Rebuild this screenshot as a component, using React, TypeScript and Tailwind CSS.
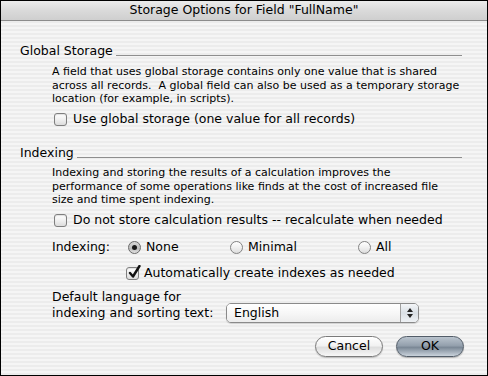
import React from "react";

const font = { fontFamily: '"DejaVu Sans", "Lucida Grande", sans-serif' };

// Aqua style checkbox
const CheckBox = ({ checked = false }: { checked?: boolean }) => (
  <div className="relative w-[13px] h-[13px] shrink-0 rounded-[3px] border border-[#7f7f7f] bg-[linear-gradient(180deg,#ffffff_0%,#f0f0f0_50%,#dcdcdc_100%)] shadow-[inset_0_1px_1px_rgba(0,0,0,0.12)]">
    {checked && (
      <svg
        className="absolute left-[1px] top-[-3px]"
        width="13"
        height="14"
        viewBox="0 0 13 14"
      >
        <path
          d="M2 8 L5 11.5 L11.5 1"
          fill="none"
          stroke="#111"
          strokeWidth="2.4"
          strokeLinecap="round"
          strokeLinejoin="round"
        />
      </svg>
    )}
  </div>
);

const Radio = ({ selected = false }: { selected?: boolean }) => (
  <div
    className={`flex items-center justify-center w-[13px] h-[13px] shrink-0 rounded-full border ${
      selected
        ? "border-[#6a6a6a] bg-[linear-gradient(180deg,#d8d8d8_0%,#bdbdbd_60%,#e2e2e2_100%)]"
        : "border-[#838383] bg-[linear-gradient(180deg,#ffffff_0%,#f0f0f0_50%,#dddddd_100%)]"
    }`}
  >
    {selected && <div className="w-[5px] h-[5px] rounded-full bg-[#1a1a1a]" />}
  </div>
);

const SectionHeading = ({ label }: { label: string }) => (
  <div className="flex items-baseline h-[16px] pr-[25px]">
    <span className="text-[12.5px] leading-[16px] text-black">{label}</span>
    <div className="flex-1 h-px bg-[#8e8e8e] ml-[3px] translate-y-[1px]" />
  </div>
);

export default function App() {
  return (
    <div
      className="w-[488px] h-[376px] border border-black flex flex-col text-black overflow-hidden"
      style={font}
    >
      {/* title bar */}
      <div className="h-[20px] shrink-0 flex items-center justify-center border-b border-[#8c8c8c] bg-[linear-gradient(180deg,#ececec_0%,#dadada_50%,#cfcfcf_100%)]">
        <span className="text-[12.5px] leading-none">
          Storage Options for Field "FullName"
        </span>
      </div>

      {/* body */}
      <div className="flex-1 pl-[19px] pt-[22px] bg-[repeating-linear-gradient(180deg,#ececec_0px,#ececec_2px,#f5f5f5_2px,#f5f5f5_4px)]">
        <SectionHeading label="Global Storage" />
        <p className="ml-[32px] mt-[6px] text-[11px] leading-[13.5px]">
          A field that uses global storage contains only one value that is shared
          <br />
          across all records.&nbsp; A global field can also be used as a temporary storage
          <br />
          location (for example, in scripts).
        </p>
        <div className="ml-[34px] mt-[5.5px] h-[16px] flex items-center gap-[6px]">
          <CheckBox />
          <span className="text-[12.5px]">Use global storage (one value for all records)</span>
        </div>

        <div className="mt-[18px]">
          <SectionHeading label="Indexing" />
        </div>
        <p className="ml-[32px] mt-[5px] text-[11px] leading-[13.5px]">
          Indexing and storing the results of a calculation improves the
          <br />
          performance of some operations like finds at the cost of increased file
          <br />
          size and time spent indexing.
        </p>
        <div className="ml-[34px] mt-[6px] h-[16px] flex items-center gap-[6px]">
          <CheckBox />
          <span className="text-[12.5px]">
            Do not store calculation results -- recalculate when needed
          </span>
        </div>

        <div className="ml-[32px] mt-[10.5px] h-[16px] flex items-center text-[12.5px]">
          <span className="w-[76px] shrink-0">Indexing:</span>
          <div className="w-[102px] flex items-center gap-[5px]">
            <Radio selected />
            <span>None</span>
          </div>
          <div className="w-[128px] flex items-center gap-[5px]">
            <Radio />
            <span>Minimal</span>
          </div>
          <div className="flex items-center gap-[5px]">
            <Radio />
            <span>All</span>
          </div>
        </div>

        <div className="ml-[106px] mt-[10px] h-[16px] flex items-center gap-[5px]">
          <CheckBox checked />
          <span className="text-[12.5px]">Automatically create indexes as needed</span>
        </div>

        <div className="ml-[32px] mt-[8px] flex items-start text-[12.5px]">
          <div className="w-[174px] shrink-0 leading-[16px]">
            Default language for
            <br />
            indexing and sorting text:
          </div>
          <div className="mt-[14px] w-[193px] h-[20px] flex rounded-[5px] border border-[#8a8a8a] overflow-hidden shadow-[0_1px_1px_rgba(0,0,0,0.15)]">
            <div className="flex-1 flex items-center pl-[7px] bg-[linear-gradient(180deg,#ffffff_0%,#f7f7f7_50%,#ececec_100%)]">
              English
            </div>
            <div className="w-[18px] flex flex-col items-center justify-center gap-[2px] border-l border-[#a0a0a0] bg-[linear-gradient(180deg,#f4f6f8_0%,#d9dfe5_50%,#eef1f4_100%)]">
              <svg width="6" height="4" viewBox="0 0 6 4">
                <path d="M0 4 L3 0 L6 4 Z" fill="#222" />
              </svg>
              <svg width="6" height="4" viewBox="0 0 6 4">
                <path d="M0 0 L3 4 L6 0 Z" fill="#222" />
              </svg>
            </div>
          </div>
        </div>

        <div className="mt-[13px] pr-[23px] flex justify-end gap-[13px] text-[12.5px]">
          <button className="w-[68px] h-[21px] rounded-full border border-[#7a7a7a] bg-[linear-gradient(180deg,#ffffff_0%,#f2f2f2_45%,#dedede_55%,#f7f7f7_100%)] shadow-[0_1px_1px_rgba(0,0,0,0.2)] leading-none">
            Cancel
          </button>
          <button className="w-[68px] h-[21px] rounded-full border border-[#525c68] bg-[linear-gradient(180deg,#b9c3cd_0%,#94a0ad_45%,#7b8896_55%,#c9d2db_100%)] shadow-[0_1px_1px_rgba(0,0,0,0.25)] leading-none">
            OK
          </button>
        </div>
      </div>
    </div>
  );
}
